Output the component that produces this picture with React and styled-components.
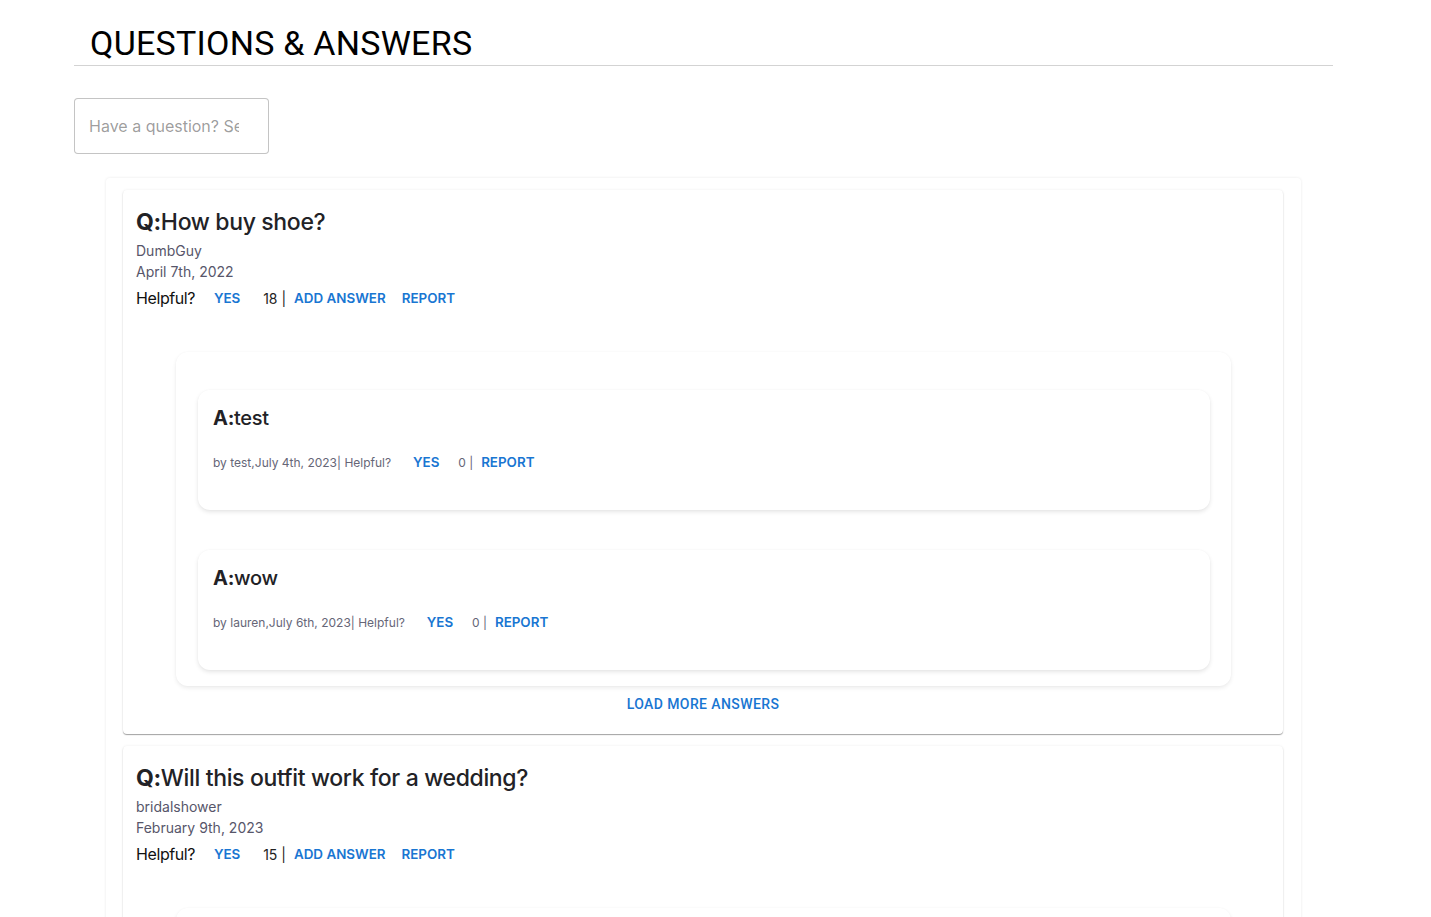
import React from 'react';
import styled, { createGlobalStyle } from 'styled-components';

const questions = [
    {
        id: 1,
        body: 'How buy shoe?',
        asker: 'DumbGuy',
        date: 'April 7th, 2022',
        helpful: 18,
        answers: [
            { id: 11, body: 'test', by: 'test', date: 'July 4th, 2023', helpful: 0 },
            { id: 12, body: 'wow', by: 'lauren', date: 'July 6th, 2023', helpful: 0 },
        ],
        more: true,
    },
    {
        id: 2,
        body: 'Will this outfit work for a wedding?',
        asker: 'bridalshower',
        date: 'February 9th, 2023',
        helpful: 15,
        answers: [],
        more: false,
    },
];

const GlobalStyle = createGlobalStyle`
    body{
        margin: 0;
        background: #fff;
        font-family: Inter, "Noto Sans", sans-serif;
    }
`;

const App = () => {
    return (
        <Page>
            <GlobalStyle />
            <Header>
                <Title>QUESTIONS &amp; ANSWERS</Title>
            </Header>
            <Search placeholder='Have a question? Search for answers…' />
            <List>
                {questions.map(q => (
                    <QCard key={q.id}>
                        <QTitle><b>Q:</b>{q.body}</QTitle>
                        <Meta>{q.asker}</Meta>
                        <Meta>{q.date}</Meta>
                        <QActions>
                            <Helpful>Helpful?</Helpful>
                            <TextButton>Yes</TextButton>
                            <Count>{q.helpful} |</Count>
                            <TextButton>Add answer</TextButton>
                            <TextButton>Report</TextButton>
                        </QActions>
                        <Answers>
                            {q.answers.map(a => (
                                <ACard key={a.id}>
                                    <ATitle><b>A:</b>{a.body}</ATitle>
                                    <Actions>
                                        <ByLine>by {a.by},{a.date}| Helpful?</ByLine>
                                        <TextButton>Yes</TextButton>
                                        <SmallCount>{a.helpful} |</SmallCount>
                                        <TextButton>Report</TextButton>
                                    </Actions>
                                </ACard>
                            ))}
                        </Answers>
                        {q.more && <LoadMore>Load more answers</LoadMore>}
                    </QCard>
                ))}
            </List>
        </Page>
    );
};

export default App;

const Page = styled.div`
    width: 1259px;
    margin-left: 74px;
    padding-top: 22px;
`

const Header = styled.div`
    padding-left: 16px;
    padding-bottom: 1px;
    border-bottom: 1px solid #d3d3d3;
`

const Title = styled.h4`
    margin: 0;
    font-family: Roboto, sans-serif;
    font-weight: 400;
    font-size: 34px;
    line-height: 42px;
    letter-spacing: 0.00735em;
    color: #000;
`

const Search = styled.input`
    display: block;
    box-sizing: border-box;
    margin-top: 32px;
    width: 195px;
    height: 56px;
    padding: 16.5px 29px 16.5px 14px;
    border: 1px solid rgba(0,0,0,0.23);
    border-radius: 4px;
    font-family: Inter, sans-serif;
    font-size: 16px;
    color: #222;
    outline: none;
    &::placeholder{
        color: rgba(0,0,0,0.4);
    }
`

const List = styled.div`
    margin: 24px 32px 0 32px;
    padding: 12px 18px 12px 17px;
    border-radius: 4px;
    box-shadow: 0 0 3px rgba(0,0,0,0.09);
    display: flex;
    flex-direction: column;
    gap: 12px;
`

const QCard = styled.div`
    padding: 16px 13px 12px 13px;
    border-radius: 4px;
    background: #fff;
    box-shadow: 0 1px 1px rgba(0,0,0,0.35), 0 0 3px rgba(0,0,0,0.07);
    display: flex;
    flex-direction: column;
`

const QTitle = styled.div`
    font-size: 23px;
    line-height: 32px;
    letter-spacing: -0.35px;
    color: #222226;
    font-weight: 450;
    margin-bottom: 2px;
    b{
        font-weight: 700;
    }
`

const Meta = styled.div`
    font-size: 14px;
    line-height: 21px;
    color: #57566a;
`

const Actions = styled.div`
    display: flex;
    align-items: center;
    height: 36px;
`

const QActions = styled(Actions)`
    margin-top: -2px;
`

const Helpful = styled.span`
    font-size: 16px;
    letter-spacing: -0.4px;
    color: #111;
`

const TextButton = styled.button`
    min-width: 64px;
    height: 36px;
    padding: 6px 8px;
    border: none;
    background: none;
    font-family: Inter, "Noto Sans", sans-serif;
    font-weight: 600;
    font-size: 13.4px;
    letter-spacing: 0;
    text-transform: uppercase;
    color: #1976d2;
    cursor: pointer;
`

const Count = styled.span`
    margin-left: 4px;
    font-size: 14px;
    color: #222;
`

const SmallCount = styled.span`
    font-size: 12px;
    color: #666677;
`

const ByLine = styled.span`
    font-size: 12px;
    color: #666677;
    margin-right: 3px;
`

const Answers = styled.div`
    margin: 36px 39px 0 40px;
    padding: 38px 21px 16px 22px;
    border-radius: 12px;
    box-shadow: 0 2px 4px rgba(0,0,0,0.08), 0 0 2px rgba(0,0,0,0.03);
    display: flex;
    flex-direction: column;
    gap: 40px;
    min-height: 40px;
`

const ACard = styled.div`
    padding: 16px 15px 30px 15px;
    border-radius: 12px;
    box-shadow: 0 2px 4px rgba(0,0,0,0.1), 0 0 2px rgba(0,0,0,0.03);
`

const ATitle = styled.div`
    font-size: 20px;
    line-height: 24px;
    font-weight: 450;
    letter-spacing: -0.3px;
    color: #222226;
    margin-bottom: 14px;
    b{
        font-weight: 700;
    }
`

const LoadMore = styled.button`
    align-self: center;
    height: 36px;
    padding: 6px 8px;
    border: none;
    background: none;
    font-family: Roboto, sans-serif;
    font-weight: 500;
    font-size: 14px;
    letter-spacing: 0.02857em;
    text-transform: uppercase;
    color: #1976d2;
    cursor: pointer;
`
